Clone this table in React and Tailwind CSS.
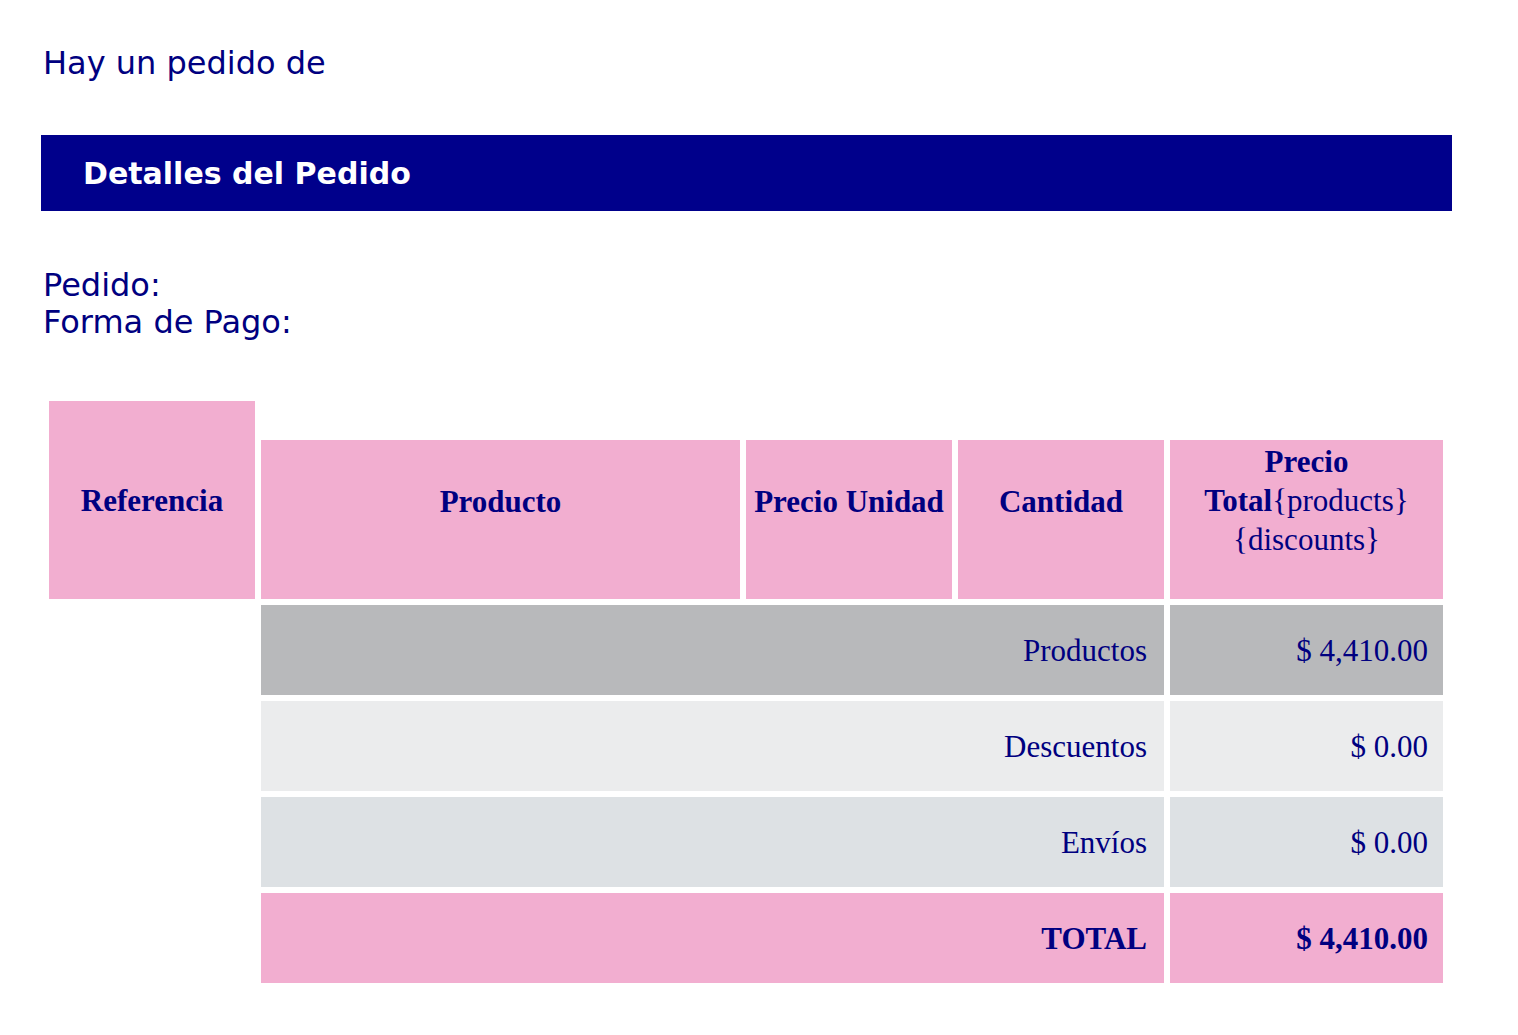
import React from "react";

const NAVY = "text-[#000080]";

const SUMMARY = [
  { label: "Productos", value: "$ 4,410.00", bg: "bg-[#b8b9bb]", bold: false },
  { label: "Descuentos", value: "$ 0.00", bg: "bg-[#ebeced]", bold: false },
  { label: "Envíos", value: "$ 0.00", bg: "bg-[#dde1e4]", bold: false },
  { label: "TOTAL", value: "$ 4,410.00", bg: "bg-[#f2aed0]", bold: true },
];

const App = () => {
  return (
    <div className="min-h-screen w-full bg-white pl-[41px] pt-[45px]">
      {/* Intro */}
      <p
        className={`pl-[2px] text-[32px] leading-[37px] ${NAVY}`}
        style={{ fontFamily: "'DejaVu Sans', Verdana, sans-serif" }}
      >
        Hay un pedido de
      </p>

      {/* Section bar */}
      <div
        className="mt-[53px] flex h-[76px] w-[1411px] items-center bg-[#00008b] pl-[42px]"
        style={{ fontFamily: "'DejaVu Sans', Verdana, sans-serif" }}
      >
        <h2 className="text-[30px] font-bold text-white">Detalles del Pedido</h2>
      </div>

      {/* Order info */}
      <div
        className={`mt-[56px] pl-[2px] text-[32px] leading-[37px] ${NAVY}`}
        style={{ fontFamily: "'DejaVu Sans', Verdana, sans-serif" }}
      >
        <p>Pedido:</p>
        <p>Forma de Pago:</p>
      </div>

      {/* Products table */}
      <div
        className={`ml-[8px] mt-[60px] grid w-[1394px] grid-cols-[206px_479px_206px_206px_273px] grid-rows-[33px_159px_90px_90px_90px_90px] gap-[6px] text-[31px] leading-[39px] ${NAVY}`}
        style={{ fontFamily: "'Liberation Serif', 'Times New Roman', serif" }}
      >
        <div className="row-span-2 flex items-center justify-center bg-[#f2aed0] font-bold">
          Referencia
        </div>
        <div className="col-span-4" />

        <div className="bg-[#f2aed0] pt-[42px] text-center font-bold">Producto</div>
        <div className="bg-[#f2aed0] pt-[42px] text-center font-bold">Precio Unidad</div>
        <div className="bg-[#f2aed0] pt-[42px] text-center font-bold">Cantidad</div>
        <div className="bg-[#f2aed0] pt-[2px] text-center">
          <span className="font-bold">Precio</span>
          <br />
          <span className="font-bold">Total</span>
          {"{products}"}
          <br />
          {"{discounts}"}
        </div>

        {SUMMARY.map((row) => (
          <React.Fragment key={row.label}>
            <div />
            <div
              className={`col-span-3 flex items-center justify-end pr-[17px] ${row.bg} ${
                row.bold ? "font-bold" : ""
              }`}
            >
              {row.label}
            </div>
            <div
              className={`flex items-center justify-end pr-[15px] ${row.bg} ${
                row.bold ? "font-bold" : ""
              }`}
            >
              {row.value}
            </div>
          </React.Fragment>
        ))}
      </div>
    </div>
  );
};

export default App;
